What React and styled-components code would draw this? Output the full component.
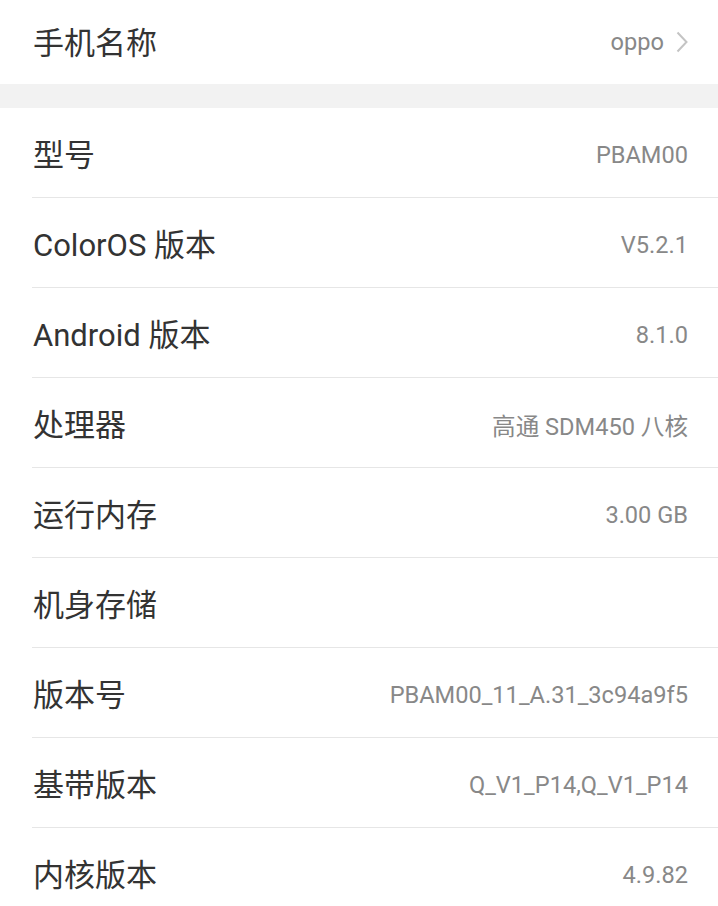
import React from "react";
import styled, { createGlobalStyle } from "styled-components";

const GlobalStyle = createGlobalStyle`
  html, body {
    margin: 0;
    padding: 0;
    background: #ffffff;
  }
  body {
    font-family: Roboto, "Noto Sans CJK SC", sans-serif;
    -webkit-font-smoothing: antialiased;
  }
`;

const Page = styled.div`
  width: 718px;
  height: 906px;
  overflow: hidden;
  background: #ffffff;
`;

const Section = styled.div`
  background: #ffffff;
`;

const Gap = styled.div`
  height: 24px;
  background: #f2f2f2;
`;

const Row = styled.div`
  height: ${({ first }) => (first ? "84px" : "89px")};
  display: flex;
  align-items: center;
  justify-content: space-between;
  padding: 0 30px 0 33px;
`;

const Divider = styled.div`
  height: 1px;
  margin-left: 32px;
  background: #e6e6e6;
`;

const Label = styled.span`
  font-size: 31px;
  color: #333333;
  margin-top: ${({ first }) => (first ? "-3px" : "0")};
`;

const Value = styled.span`
  display: flex;
  align-items: center;
  gap: 12px;
  font-size: 23.6px;
  color: #888888;
  margin-top: ${({ first }) => (first ? "0" : "5px")};
`;

const Chevron = () => (
  <svg width="12" height="22" viewBox="0 0 12 22" fill="none">
    <path d="M1.5 1.5 L10.5 11 L1.5 20.5" stroke="#c4c4c4" strokeWidth="2" />
  </svg>
);

const items = [
  { label: "型号", value: "PBAM00" },
  { label: "ColorOS 版本", value: "V5.2.1" },
  { label: "Android 版本", value: "8.1.0" },
  { label: "处理器", value: "高通 SDM450 八核" },
  { label: "运行内存", value: "3.00 GB" },
  { label: "机身存储", value: "" },
  { label: "版本号", value: "PBAM00_11_A.31_3c94a9f5" },
  { label: "基带版本", value: "Q_V1_P14,Q_V1_P14" },
  { label: "内核版本", value: "4.9.82" },
];

export default function App() {
  return (
    <Page>
      <GlobalStyle />
      <Section>
        <Row first>
          <Label first>手机名称</Label>
          <Value first>
            oppo
            <Chevron />
          </Value>
        </Row>
      </Section>
      <Gap />
      <Section>
        {items.map((item, i) => (
          <React.Fragment key={item.label}>
            {i > 0 && <Divider />}
            <Row>
              <Label>{item.label}</Label>
              <Value>{item.value}</Value>
            </Row>
          </React.Fragment>
        ))}
      </Section>
    </Page>
  );
}
